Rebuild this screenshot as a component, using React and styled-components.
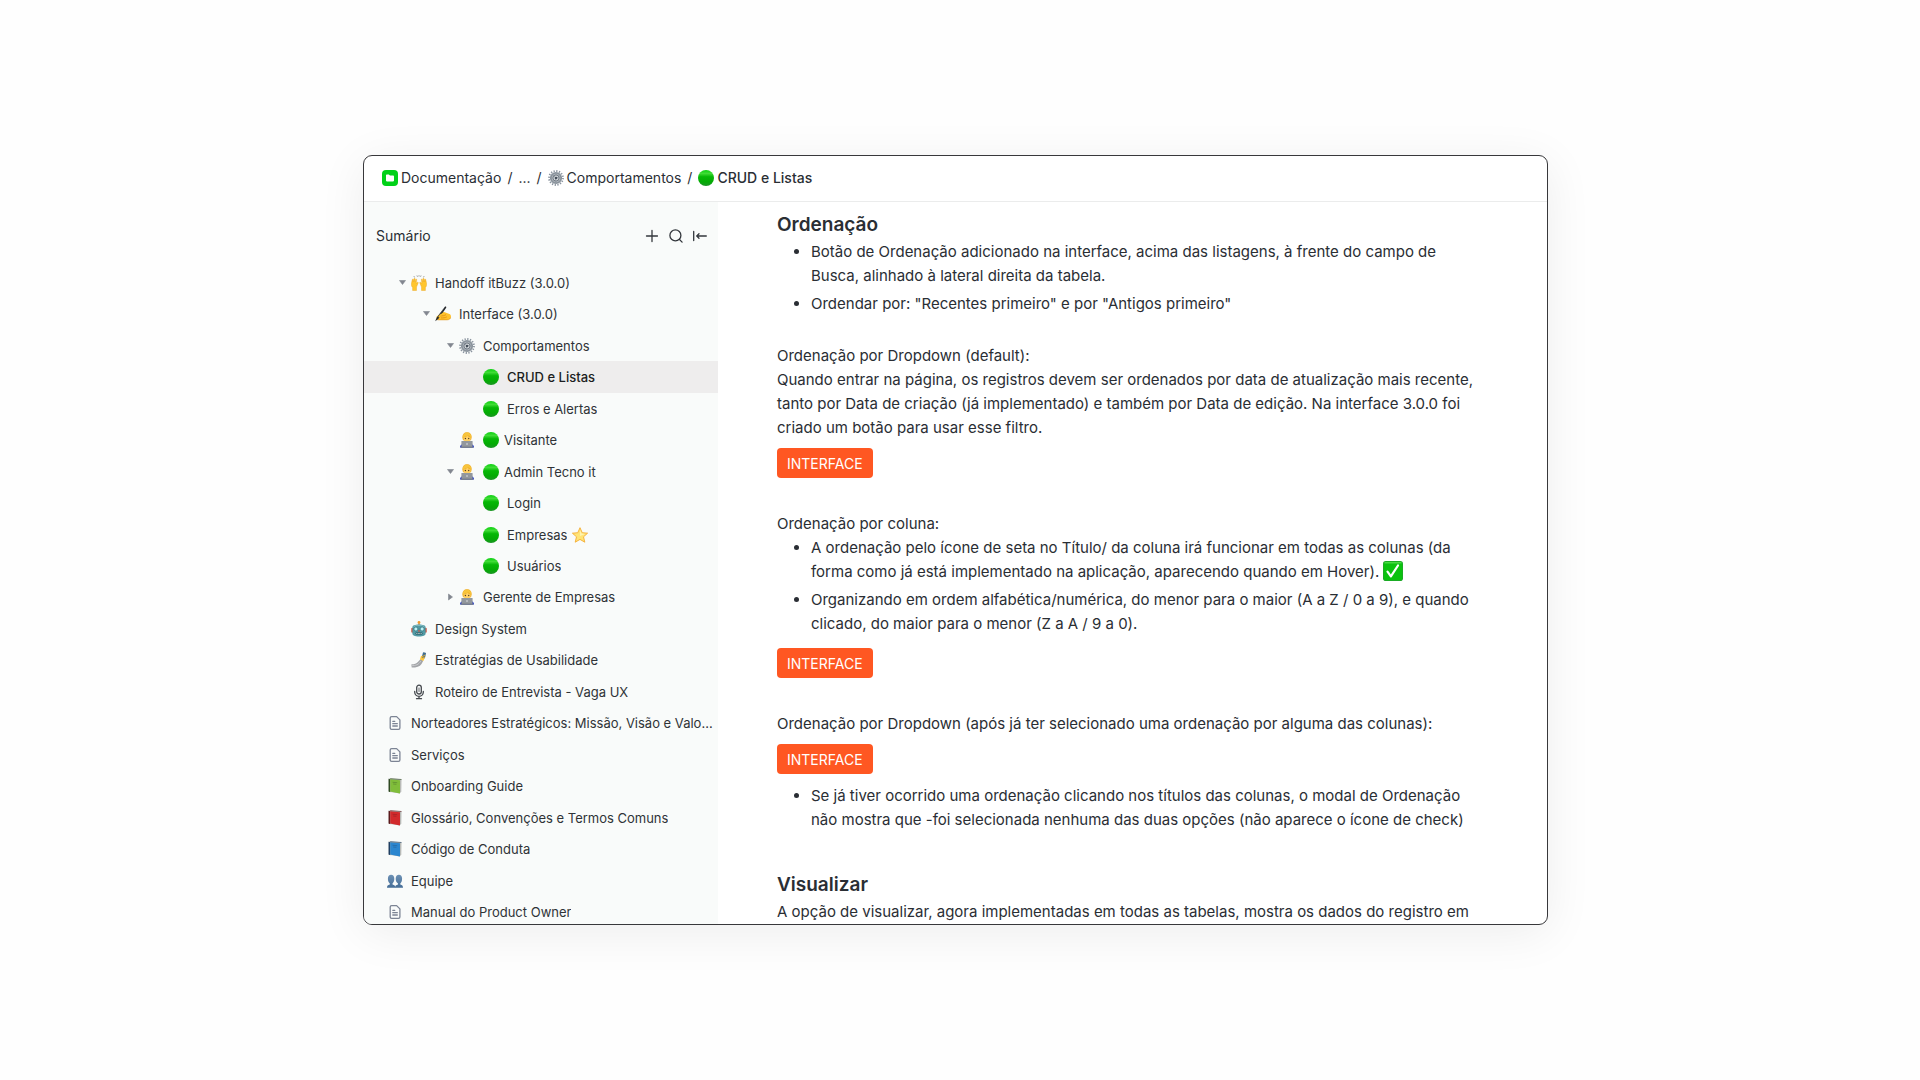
import React from 'react';
import styled, { createGlobalStyle } from 'styled-components';

const GlobalStyle = createGlobalStyle`
  * {
    box-sizing: border-box;
  }

  body {
    margin: 0;
    background: #fefefe;
    color: #2a2e34;
    font-family: Inter, "Liberation Sans", sans-serif;
    font-size: 15px;
    -webkit-font-smoothing: antialiased;
  }

  a {
    color: inherit;
    text-decoration: none;
  }

  ul {
    margin: 0;
  }
`;

const Page = styled.div`
  display: flex;
  height: 100vh;
  padding: 155px 372px 155px 363px;
`;

const Window = styled.div`
  flex: 1;
  min-width: 0;
  display: flex;
  flex-direction: column;
  border: 1px solid #38383b;
  border-radius: 9px;
  background: white;
  overflow: hidden;
  box-shadow: 0 8px 48px rgba(0, 0, 0, 0.07);
`;

const Header = styled.header`
  flex: none;
  height: 46px;
  padding: 0 18px 2px;
  border-bottom: 1px solid #ebecec;
  display: flex;
  align-items: center;
`;

const Breadcrumb = styled.nav`
  display: flex;
  align-items: center;
  gap: 6px;
  font-size: 14px;
  line-height: 20px;
`;

const Crumb = styled.a`
  display: flex;
  align-items: center;
  gap: 3px;
  font-weight: ${(props) => (props.$current ? 500 : 400)};
`;

const Body = styled.div`
  flex: 1;
  min-height: 0;
  display: flex;
`;

const Sidebar = styled.aside`
  flex: none;
  width: 354px;
  background: #f9fbfa;
  overflow: hidden;
`;

const SidebarHead = styled.div`
  height: 65px;
  padding: 2px 10px 0 12px;
  display: flex;
  align-items: center;
  justify-content: space-between;
  font-size: 14px;
`;

const Tools = styled.div`
  display: flex;
  gap: 8px;
`;

const ToolButton = styled.button`
  width: 16px;
  height: 16px;
  padding: 0;
  border: 0;
  background: none;
  color: #33373c;
  cursor: pointer;

  svg {
    display: block;
  }
`;

const Tree = styled.ul`
  height: 661px;
  padding: 0;
  list-style: none;
  display: grid;
  grid-template-columns: minmax(0, 1fr);
  grid-auto-rows: 1fr;
`;

const TreeRow = styled.li`
  display: flex;
  align-items: center;
  padding: 0 4px 0 ${(props) => 7 + props.$level * 24}px;
  background: ${(props) => (props.$active ? '#eeeded' : 'none')};
  color: ${(props) => (props.$active ? '#1c1e21' : '#2f3337')};
  font-weight: ${(props) => (props.$active ? 500 : 400)};
  font-size: 13px;
`;

const Caret = styled.button`
  flex: none;
  width: 16px;
  height: 16px;
  padding: 0;
  border: 0;
  background: none;
  cursor: pointer;

  svg {
    display: block;
  }
`;

const CaretSpace = styled.span`
  flex: none;
  width: 16px;
`;

const TreeLink = styled.a`
  min-width: 0;
  display: flex;
  align-items: center;
  gap: 8px;
`;

const TreeLabel = styled.span`
  display: flex;
  align-items: center;
  gap: 5px;
  min-width: 0;
`;

const TreeText = styled.span`
  overflow: hidden;
  white-space: nowrap;
  text-overflow: ellipsis;
`;

const Icon = styled.svg`
  flex: none;
  display: block;
`;

const Content = styled.main`
  flex: 1;
  min-width: 0;
  padding: 10px 70px 0 59px;
  overflow: hidden;
  line-height: 24px;
`;

const Section = styled.section`
  margin-bottom: ${(props) => props.$space || 34}px;
`;

const Title = styled.h2`
  margin: 0 0 2px;
  font-size: 19px;
  line-height: 26px;
  font-weight: 600;
`;

const Text = styled.p`
  margin: 0;
`;

const Bullets = styled.ul`
  padding-left: 34px;

  li + li {
    margin-top: 4px;
  }
`;

const InlineIcon = styled(Icon)`
  display: inline-block;
  vertical-align: -4px;
`;

const TagButton = styled.button`
  display: block;
  height: 30px;
  margin: ${(props) => props.$top || 8}px 0 10px;
  padding: 0 10px;
  border: 0;
  border-radius: 4px;
  background: #ff5722;
  color: white;
  font-family: inherit;
  font-size: 14px;
  cursor: pointer;
`;

/* icons */

const Folder = () => (
  <Icon width="16" height="16" viewBox="0 0 16 16">
    <rect width="16" height="16" rx="4" fill="#00d118" />
    <path d="M4 5.200c0-.5.3-.8.8-.8h2l1.200 1.200h3.200c.5 0 .8.3.8.8v4.200c0 .5-.3.8-.8.8H4.800c-.5 0-.8-.3-.8-.8z" fill="#fff" />
  </Icon>
);

const Green = () => (
  <Icon width="16" height="16" viewBox="0 0 16 16">
    <defs>
      <linearGradient id="green" x1="0" y1="0" x2="0" y2="1">
        <stop offset="0" stopColor="#0bd010" />
        <stop offset=".22" stopColor="#3fdc35" />
        <stop offset=".42" stopColor="#06b806" />
        <stop offset=".75" stopColor="#04aa04" />
        <stop offset="1" stopColor="#1d9426" />
      </linearGradient>
    </defs>
    <circle cx="8" cy="8" r="8" fill="url(#green)" />
  </Icon>
);

const Gear = () => (
  <Icon width="16" height="16" viewBox="0 0 16 16">
    <circle cx="8" cy="8" r="7" fill="none" stroke="#8b95a0" strokeWidth="1.800" strokeDasharray="1.3 1.450" />
    <circle cx="8" cy="8" r="5.200" fill="#b4bac0" stroke="#8a939c" strokeWidth="1.800" />
    <circle cx="8" cy="8" r="3.100" fill="#d3d7da" stroke="#626c77" strokeWidth=".9" />
    <path d="M8 8 4.600 4.800M8 8l4-1M8 8l-1 4.500" stroke="#8d969f" strokeWidth=".8" />
    <circle cx="8" cy="8" r="1.300" fill="#434d59" />
  </Icon>
);

const Hands = () => (
  <Icon width="16" height="16" viewBox="0 0 16 16">
    <path d="M3 1.300l.5 1M6 .6l.4 1M8 .4v1M10 .6l-.4 1M13 1.300l-.5 1" stroke="#5c5f66" strokeWidth=".8" />
    <g fill="#ffc62e" stroke="#e8a21c" strokeWidth=".4">
      <path d="M1.600 15.500v-3C.3 11.300.2 9.800.6 7.600l.7-3c.2-.8 1-.6 1 .1L2.200 7l.8-3.300c.3-.8 1.200-.6 1.100.2L3.900 7l.8-2.500c.3-.7 1.100-.5 1 .3L5.200 8.300l1-.9c.8-.5 1.300.1.9.8L5.500 12v3.500z" />
      <path d="M14.400 15.500v-3c1.300-1.200 1.400-2.700 1-4.900l-.7-3c-.2-.8-1-.6-1 .1l.1 2.300-.8-3.300c-.3-.8-1.200-.6-1.100.2l.2 3.100-.8-2.500c-.3-.7-1.100-.5-1 .3l.5 3.500-1-.9c-.8-.5-1.300.1-.9.8l1.600 3.800v3.500z" />
    </g>
  </Icon>
);

const Writing = () => (
  <Icon width="16" height="16" viewBox="0 0 16 16">
    <path d="M1.800 10.400 5.500 7.200c1.200-1 2.400-1.400 3.600-1.200l5.300 2c1 .4 1.500 1.200 1.500 2.300 0 2.200-1.500 3.600-3.700 3.600H4c-2 0-3-1.500-2.200-3.500z" fill="#ffc22c" />
    <path d="M5.500 9.800c2 .3 4-.2 5.500-1.200M6 11.900c2 .2 4.200-.2 5.800-1" fill="none" stroke="#df8c12" strokeWidth=".8" />
    <path d="M2.500 13.800h9.700c2 0 3.400-1.200 3.700-2.700" fill="none" stroke="#e2981c" strokeWidth=".7" />
    <path d="M.2 15.200 1.600 11.800 9.900.8c.6-.7 1.700.1 1.300.9L3.200 13z" fill="#24272b" />
    <path d="m3.500 9.900 4.800-6.600" stroke="#6d7379" strokeWidth=".5" />
    <path d="M4.200 10.700c.9-1.500 1.900-2.400 3.300-2.700" fill="none" stroke="#ffc22c" strokeWidth="1.600" strokeLinecap="round" />
  </Icon>
);

const Technologist = () => (
  <Icon width="16" height="16" viewBox="0 0 16 16">
    <path d="M1 15.600c0-2.200 1.300-3.400 3.600-3.800h6.800c2.300.4 3.600 1.600 3.600 3.800z" fill="#2339c9" />
    <path d="M3.400 5.800C3.300 2 5.100.2 8 .2s4.900 1.800 4.600 5.600l-.6 2.400H4z" fill="#f0b02c" />
    <path d="M4.600 5.400C6.500 5.300 8 4.700 8.800 3.800c.6 1 1.500 1.500 2.700 1.600.3 3.400-1.300 5.400-3.500 5.400S4.400 8.800 4.600 5.400z" fill="#ffd063" />
    <path d="M3.800 6.200C3.500 2.800 5.300.8 8 .8s4.700 2 4.200 5.400c-.6-1.500-1.500-2.400-2.800-2.900C7.600 4.300 5.200 4.500 3.800 6.200z" fill="#f7c43c" />
    <circle cx="6.400" cy="6.500" r=".7" fill="#59401f" />
    <circle cx="9.700" cy="6.500" r=".7" fill="#59401f" />
    <rect x="2.400" y="8.900" width="11.200" height="6.400" rx=".7" fill="#92979d" />
    <path d="M1.600 14.700h12.800v1H1.600z" fill="#6e747a" />
    <circle cx="8" cy="12" r=".8" fill="#e4e7e9" />
  </Icon>
);

const Star = () => (
  <Icon width="16" height="16" viewBox="0 0 16 16">
    <path d="m8 .7 2.200 5 5.400.5-4.100 3.600 1.300 5.400L8 12.400l-4.800 2.800 1.300-5.400L.4 6.200l5.400-.5z" fill="#ffe476" stroke="#f4ad32" strokeWidth=".9" strokeLinejoin="round" />
    <path d="m8 2.900 1.500 3.700 3.600.4L8 9z" fill="#fff3b0" />
  </Icon>
);

const Robot = () => (
  <Icon width="16" height="16" viewBox="0 0 16 16">
    <path d="M7.500 2h1v3h-1z" fill="#a5702d" />
    <circle cx="8" cy="1.400" r="1.400" fill="#f29a2e" />
    <rect x=".3" y="6.800" width="2" height="5" rx="1" fill="#d04d3a" />
    <rect x="13.700" y="6.800" width="2" height="5" rx="1" fill="#d04d3a" />
    <path d="M1.400 6.300C1.400 4.500 4 3.500 8 3.500s6.600 1 6.600 2.800v6.200c0 1.800-2.300 3.100-6.600 3.100s-6.600-1.300-6.600-3.100z" fill="#529aa4" />
    <path d="M2.600 6C3.800 4.700 6 4.400 8 4.400s4.200.3 5.400 1.600" fill="none" stroke="#93c7cb" strokeWidth=".8" />
    <circle cx="4.900" cy="8" r="2" fill="#bdf2f5" stroke="#25646f" strokeWidth=".6" />
    <circle cx="11.100" cy="8" r="2" fill="#bdf2f5" stroke="#25646f" strokeWidth=".6" />
    <path d="m8 8.500 1.100 2H6.900z" fill="#d64c3a" />
    <rect x="4.400" y="11.500" width="7.200" height="2" rx="1" fill="#24515a" />
    <path d="M5.300 12.500h5.400" stroke="#d9edef" strokeWidth=".8" strokeDasharray="1 .5" />
  </Icon>
);

const Selfie = () => (
  <Icon width="16" height="16" viewBox="0 0 16 16">
    <path d="M.4 12.200c3.200 0 5-.5 6.500-2.300l2.700-2.800 2.700 1.600-1.800 3.200c-1.700 2.700-5 3.700-9.800 3.700z" fill="#a3a5a8" />
    <path d="M.4 13.700c4.200 0 7.600-1 9.300-4.700" fill="none" stroke="#c9cbcd" strokeWidth="1" />
    <path d="m9 7.200 1-3.100 3.100-.7 1 1.600-1.700 4z" fill="#ffc83c" />
    <rect x="11.300" y=".4" width="3.200" height="5.600" rx=".7" transform="rotate(14 12.800 3.400)" fill="#426e8f" />
    <path d="m11 4.800 2.800-1.600M11.500 6.200l2.200-1" stroke="#f4b329" strokeWidth=".9" strokeLinecap="round" />
  </Icon>
);

const Mic = () => (
  <Icon width="16" height="16" viewBox="0 0 16 16" fill="none" stroke="#44484d" strokeWidth="1.300" strokeLinecap="round">
    <rect x="5.700" y="1.200" width="4.600" height="8.800" rx="2.300" />
    <path d="M3.700 7.500v.5a4.300 4.300 0 0 0 8.600 0v-.5M8 12.300v2.200M5.500 14.700h5" />
    <path d="M8 4v3.500" strokeWidth=".8" />
  </Icon>
);

const Doc = () => (
  <Icon width="16" height="16" viewBox="0 0 16 16" fill="none" stroke="#7c8494" strokeWidth="1.300" strokeLinecap="round" strokeLinejoin="round">
    <path d="M3.200 3c0-.9.5-1.400 1.400-1.400h5l3.300 3.300v8c0 .9-.5 1.400-1.400 1.400H4.600c-.9 0-1.400-.5-1.400-1.400z" />
    <path d="M5.800 6.300h2M5.800 8.700h4.500M5.800 11h4.500" />
  </Icon>
);

const Book = ({ color, spine }) => (
  <Icon width="16" height="16" viewBox="0 0 16 16">
    <path d="m1.600.7 1.600-.4 11.300 1-.2 12.400-1.700 1.900L1.600 13.700z" fill="#b9bbb8" />
    <path d="m1.600.7 1.600.6v13L1.600 13.600z" fill={spine} />
    <path d="m3.200 1.200 9.800 1v13.300l-9.800-1.900z" fill={color} />
    <path d="m3.200.7 11.300.8" stroke={spine} strokeWidth=".6" />
    <path d="m5.600 4.300 4.600.4M6.200 6l3.200.3" stroke={spine} strokeWidth=".7" opacity=".45" />
  </Icon>
);

const People = () => (
  <Icon width="16" height="16" viewBox="0 0 16 16">
    <defs>
      <linearGradient id="people" x1="0" y1="0" x2="0" y2="1">
        <stop offset="0" stopColor="#6d91b5" />
        <stop offset="1" stopColor="#456d96" />
      </linearGradient>
    </defs>
    <path d="M8 14.800c.1-2 .9-2.700 3-3.200v-1.200C9.300 9.400 8.700 7.800 8.700 5.700c0-2.600 1.200-4 3.200-4s3.200 1.400 3.200 4c0 2.100-.6 3.700-1.800 4.700v1.200c1.900.5 2.700 1.200 2.700 3.200z" fill="url(#people)" />
    <path d="M0 14.800c0-2 .8-2.700 2.800-3.200v-1.200C1.500 9.400.9 7.800.9 5.700c0-2.600 1.200-4 3.200-4s3.200 1.400 3.200 4c0 2.100-.6 3.700-1.800 4.700v1.200c2 .5 2.900 1.200 2.900 3.200z" fill="url(#people)" />
  </Icon>
);

const Check = () => (
  <InlineIcon width="20" height="20" viewBox="0 0 20 20">
    <rect width="20" height="20" rx="2.800" fill="#21a52c" />
    <rect x=".7" y=".7" width="18.600" height="18.600" rx="2.200" fill="#0bc20f" />
    <path d="M1.500 1.800h17" stroke="#58df50" strokeWidth="1.200" />
    <path d="m4.500 10.600 3.400 4.700L15 4.500" fill="none" stroke="#fff" strokeWidth="2.200" strokeLinecap="round" strokeLinejoin="round" />
  </InlineIcon>
);

const Triangle = ({ open }) => (
  <svg width="16" height="16" viewBox="0 0 16 16">
    <path d={open ? 'M4.500 5.500h6L7.500 9.500z' : 'M5.500 5v6l4-3z'} fill="#82868f" stroke="#82868f" strokeWidth=".6" strokeLinejoin="round" />
  </svg>
);

const tree = [
  { level: 1, caret: 'open', icon: <Hands />, text: 'Handoff itBuzz (3.0.0)' },
  { level: 2, caret: 'open', icon: <Writing />, text: 'Interface (3.0.0)' },
  { level: 3, caret: 'open', icon: <Gear />, text: 'Comportamentos' },
  { level: 4, icon: <Green />, text: 'CRUD e Listas', active: true },
  { level: 4, icon: <Green />, text: 'Erros e Alertas' },
  { level: 3, icon: <Technologist />, before: <Green />, text: 'Visitante' },
  { level: 3, caret: 'open', icon: <Technologist />, before: <Green />, text: 'Admin Tecno it' },
  { level: 4, icon: <Green />, text: 'Login' },
  { level: 4, icon: <Green />, text: 'Empresas', after: <Star /> },
  { level: 4, icon: <Green />, text: 'Usuários' },
  { level: 3, caret: 'closed', icon: <Technologist />, text: 'Gerente de Empresas' },
  { level: 1, icon: <Robot />, text: 'Design System' },
  { level: 1, icon: <Selfie />, text: 'Estratégias de Usabilidade' },
  { level: 1, icon: <Mic />, text: 'Roteiro de Entrevista - Vaga UX' },
  { level: 0, icon: <Doc />, text: 'Norteadores Estratégicos: Missão, Visão e Valores' },
  { level: 0, icon: <Doc />, text: 'Serviços' },
  { level: 0, icon: <Book color="#80bd3a" spine="#2f4a22" />, text: 'Onboarding Guide' },
  { level: 0, icon: <Book color="#d22a2c" spine="#5c1a1c" />, text: 'Glossário, Convenções e Termos Comuns' },
  { level: 0, icon: <Book color="#2b86cf" spine="#1f3f63" />, text: 'Código de Conduta' },
  { level: 0, icon: <People />, text: 'Equipe' },
  { level: 0, icon: <Doc />, text: 'Manual do Product Owner' },
];

function TreeItem(props) {
  const { item } = props;

  return (
    <TreeRow $level={item.level} $active={item.active}>
      {item.caret ? (
        <Caret aria-label={item.text} aria-expanded={item.caret === 'open'}>
          <Triangle open={item.caret === 'open'} />
        </Caret>
      ) : (
        <CaretSpace />
      )}
      <TreeLink href="#">
        {item.icon}
        <TreeLabel>
          {item.before}
          <TreeText>{item.text}</TreeText>
          {item.after}
        </TreeLabel>
      </TreeLink>
    </TreeRow>
  );
}

function App() {
  return (
    <>
      <GlobalStyle />
      <Page>
        <Window>
          <Header>
            <Breadcrumb>
              <Crumb href="#"><Folder />Documentação</Crumb>
              <span>/</span>
              <Crumb href="#">...</Crumb>
              <span>/</span>
              <Crumb href="#"><Gear />Comportamentos</Crumb>
              <span>/</span>
              <Crumb href="#" $current><Green />CRUD e Listas</Crumb>
            </Breadcrumb>
          </Header>

          <Body>
            <Sidebar>
              <SidebarHead>
                <span>Sumário</span>
                <Tools>
                  <ToolButton aria-label="Adicionar">
                    <svg width="16" height="16" viewBox="0 0 16 16" fill="none" stroke="currentColor" strokeWidth="1.300" strokeLinecap="round">
                      <path d="M8 2.500v11M2.500 8h11" />
                    </svg>
                  </ToolButton>
                  <ToolButton aria-label="Buscar">
                    <svg width="16" height="16" viewBox="0 0 16 16" fill="none" stroke="currentColor" strokeWidth="1.300" strokeLinecap="round">
                      <circle cx="7.400" cy="7.400" r="5.500" />
                      <path d="m11.500 11.500 2.600 2.600" />
                    </svg>
                  </ToolButton>
                  <ToolButton aria-label="Recolher">
                    <svg width="16" height="16" viewBox="0 0 16 16" fill="none" stroke="currentColor" strokeWidth="1.300" strokeLinecap="round" strokeLinejoin="round">
                      <path d="M1.700 3.500v9M14.300 8H4.700M7 5.700 4.700 8 7 10.300" />
                    </svg>
                  </ToolButton>
                </Tools>
              </SidebarHead>
              <Tree>
                {tree.map((item) => (
                  <TreeItem key={item.text} item={item} />
                ))}
              </Tree>
            </Sidebar>

            <Content>
              <Section $space={28}>
                <Title>Ordenação</Title>
                <Bullets>
                  <li>Botão de Ordenação adicionado na interface, acima das listagens, à frente do campo de Busca, alinhado à lateral direita da tabela.</li>
                  <li>Ordendar por: "Recentes primeiro" e por "Antigos primeiro"</li>
                </Bullets>
              </Section>

              <Section>
                <Text>Ordenação por Dropdown (default):</Text>
                <Text>
                  Quando entrar na página, os registros devem ser ordenados por data de atualização mais recente, tanto por Data de criação (já implementado) e também por Data de edição. Na interface 3.0.0 foi criado um botão para usar esse filtro.
                </Text>
                <TagButton>INTERFACE</TagButton>
              </Section>

              <Section>
                <Text>Ordenação por coluna:</Text>
                <Bullets>
                  <li>A ordenação pelo ícone de seta no Título/ da coluna irá funcionar em todas as colunas (da forma como já está implementado na aplicação, aparecendo quando em Hover). <Check /></li>
                  <li>Organizando em ordem alfabética/numérica, do menor para o maior (A a Z / 0 a 9), e quando clicado, do maior para o menor (Z a A / 9 a 0).</li>
                </Bullets>
                <TagButton $top={12}>INTERFACE</TagButton>
              </Section>

              <Section $space={40}>
                <Text>Ordenação por Dropdown (após já ter selecionado uma ordenação por alguma das colunas):</Text>
                <TagButton>INTERFACE</TagButton>
                <Bullets>
                  <li>Se já tiver ocorrido uma ordenação clicando nos títulos das colunas, o modal de Ordenação não mostra que -foi selecionada nenhuma das duas opções (não aparece o ícone de check)</li>
                </Bullets>
              </Section>

              <Section>
                <Title>Visualizar</Title>
                <Text>A opção de visualizar, agora implementadas em todas as tabelas, mostra os dados do registro em</Text>
              </Section>
            </Content>
          </Body>
        </Window>
      </Page>
    </>
  );
}

export default App;
